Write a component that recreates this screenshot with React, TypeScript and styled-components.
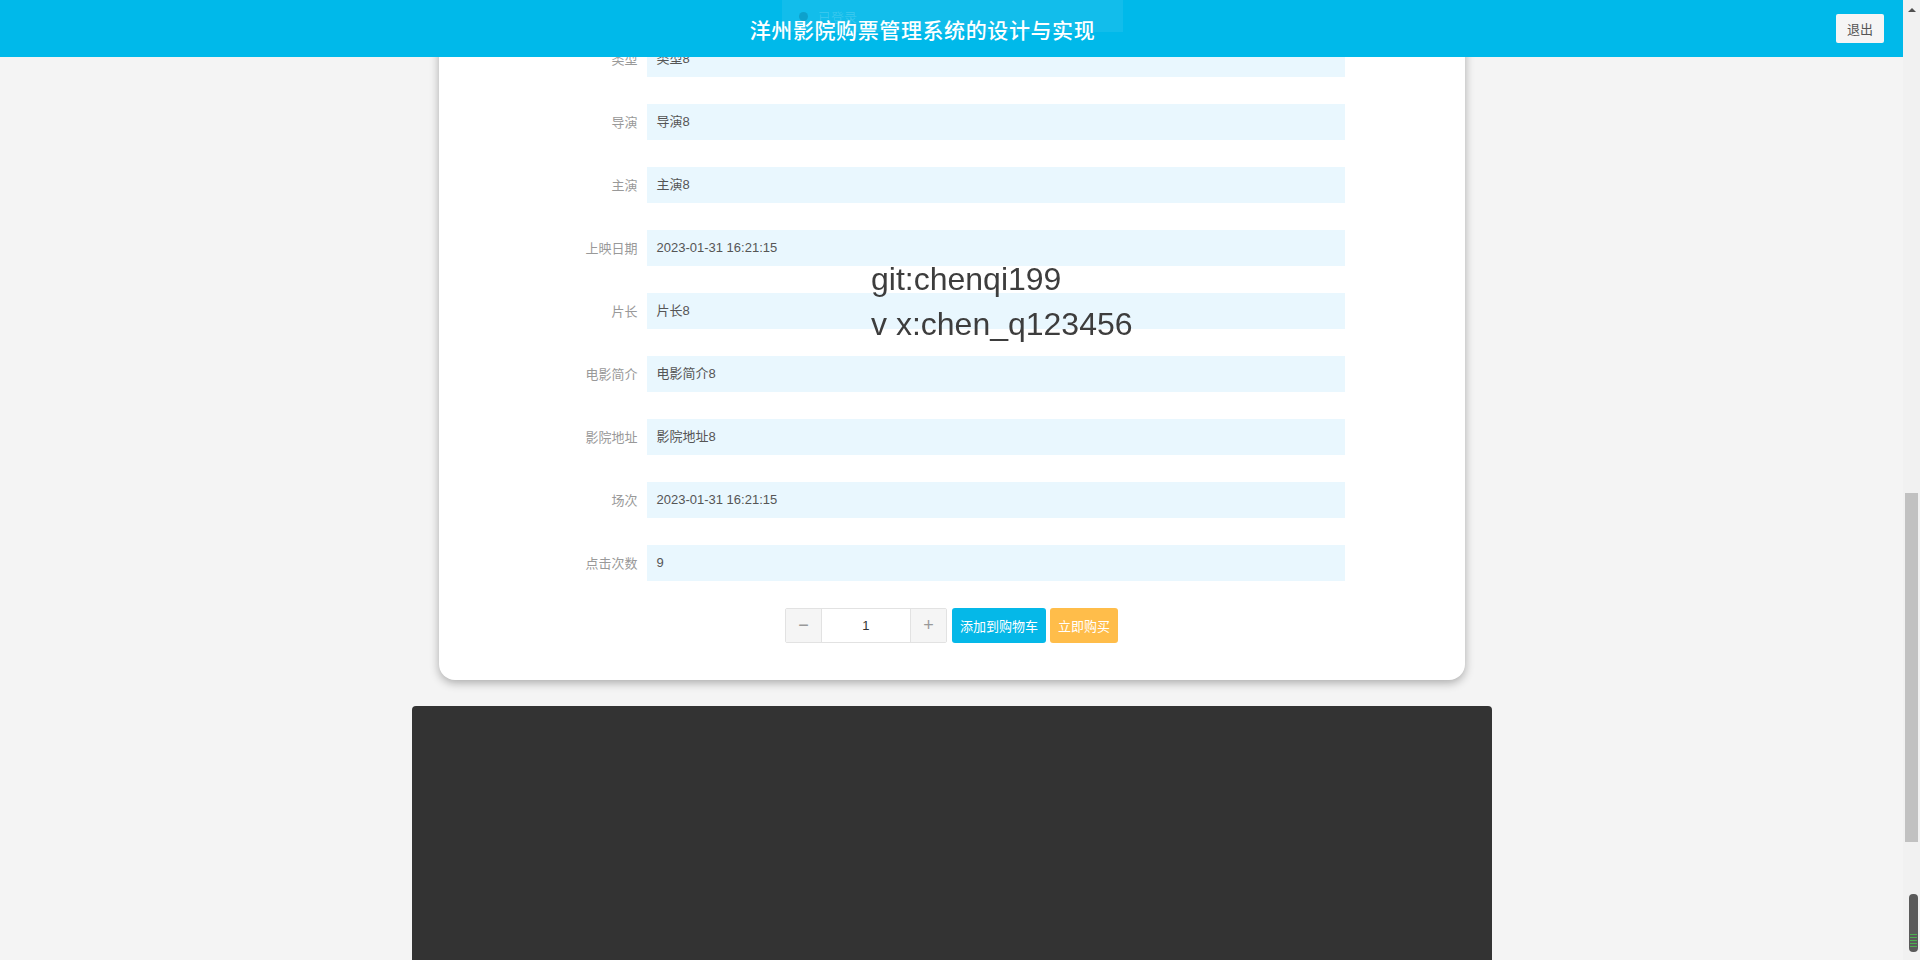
import React, { useLayoutEffect, useRef } from 'react'
import styled, { createGlobalStyle } from 'styled-components'

const GlobalStyle = createGlobalStyle`
  html, body {
    margin: 0;
    padding: 0;
    background: #f4f4f4;
    font-family: "Liberation Sans", "Noto Sans CJK SC", sans-serif;
  }

  ::-webkit-scrollbar {
    width: 0;
  }
`

const HeaderBar = styled.header`
  position: fixed;
  top: 0;
  left: 0;
  right: 17px;
  z-index: 10;
  height: 57px;
  display: flex;
  align-items: center;
  padding: 0 19px 0 9px;
  background: #00b9ea;
`

const Title = styled.h1`
  flex: 1;
  margin: 0;
  text-align: center;
  color: #fff;
  font-size: 21px;
  font-weight: 500;
  font-family: "Noto Sans CJK SC", sans-serif;
  letter-spacing: 0.6px;
`

const Ghost = styled.div`
  position: absolute;
  top: 0;
  left: 782px;
  width: 341px;
  height: 32px;
  display: flex;
  align-items: center;
  gap: 10px;
  padding-left: 17px;
  box-sizing: border-box;
  background: rgba(255, 255, 255, 0.07);
  color: rgba(255, 255, 255, 0.16);
  font-size: 13px;
  font-family: "Noto Sans CJK SC", sans-serif;
`

const GhostDot = styled.span`
  width: 9px;
  height: 9px;
  border-radius: 50%;
  background: rgba(0, 80, 110, 0.25);
`

const LogoutButton = styled.button`
  width: 48px;
  height: 29px;
  padding: 0;
  border: none;
  border-radius: 2px;
  background: #f5f5f5;
  color: #555;
  font-size: 13px;
  font-family: "Noto Sans CJK SC", sans-serif;
`

const Page = styled.main`
  padding: 77px 17px 0 0;
`

const Banner = styled.div`
  width: 1080px;
  height: 480px;
  margin: 0 auto 20px;
  border-radius: 4px;
  background: linear-gradient(135deg, #5a6b7c, #2f3a46);
`

const Card = styled.section`
  width: 1026px;
  margin: 0 auto 26px;
  padding: 40px 120px 37px 0;
  box-sizing: border-box;
  background: #fff;
  border-radius: 16px;
  box-shadow: 0 3px 10px rgba(0, 0, 0, 0.3);
`

const Row = styled.div`
  display: flex;
  align-items: flex-start;
  margin-bottom: 27px;
`

const Label = styled.div`
  flex: 0 0 208px;
  padding-right: 9px;
  box-sizing: border-box;
  text-align: right;
  line-height: 36px;
  color: #999;
  font-size: 13px;
  font-family: "Noto Sans CJK SC", sans-serif;
`

const Value = styled.div`
  flex: 1;
  height: 36px;
  line-height: 36px;
  padding: 0 10px;
  background: #e9f7fe;
  color: #555;
  font-size: 13px;
  font-family: "Liberation Sans", "Noto Sans CJK SC", sans-serif;
`

const Poster = styled.div`
  flex: 0 0 360px;
  height: 500px;
  border-radius: 4px;
  background: linear-gradient(160deg, #d7dde3, #9aa6b2);
`

const Actions = styled.div`
  display: flex;
  justify-content: center;
  align-items: center;
  gap: 4px;
  padding-left: 120px;
`

const Stepper = styled.div`
  display: flex;
  height: 35px;
  margin-right: 1px;
  border: 1px solid #e2e2e2;
  box-sizing: border-box;
  border-radius: 2px;
`

const StepButton = styled.button`
  width: 35px;
  padding: 0;
  border: none;
  background: #f5f5f5;
  color: #999;
  font-size: 18px;
  font-family: "Liberation Sans", sans-serif;
  font-weight: 300;
`

const StepInput = styled.div`
  width: 88px;
  display: flex;
  align-items: center;
  justify-content: center;
  border-left: 1px solid #e2e2e2;
  border-right: 1px solid #e2e2e2;
  background: #fff;
  color: #333;
  font-size: 13px;
`

const ActionButton = styled.button<{ tone: 'blue' | 'orange' }>`
  height: 35px;
  padding: 0 8px;
  border: none;
  border-radius: 3px;
  background: ${({ tone }) => (tone === 'blue' ? '#05b8e8' : '#ffbd4a')};
  color: #fff;
  font-size: 13px;
  font-family: "Noto Sans CJK SC", sans-serif;
`

const Footer = styled.footer`
  width: 1080px;
  height: 534px;
  margin: 0 auto;
  border-radius: 4px 4px 0 0;
  background: #333;
`

const Watermark = styled.div`
  position: fixed;
  top: 257px;
  left: 871px;
  z-index: 20;
  color: #3d3d3d;
  font-size: 32px;
  line-height: 45px;
  font-family: "Liberation Sans", sans-serif;
  pointer-events: none;
`

/* window scrollbar, drawn over the right edge */
const ScrollTrack = styled.aside`
  position: fixed;
  top: 0;
  right: 0;
  bottom: 0;
  z-index: 25;
  width: 17px;
  background: #f1f1f1;
`

const ScrollArrow = styled.span`
  position: absolute;
  top: 8px;
  left: 5px;
  width: 0;
  height: 0;
  border-left: 4px solid transparent;
  border-right: 4px solid transparent;
  border-bottom: 4px solid #505050;
`

const ScrollThumb = styled.span`
  position: absolute;
  top: 493px;
  left: 2px;
  width: 13px;
  height: 349px;
  background: #c1c1c1;
`

const Widget = styled.div`
  position: fixed;
  top: 894px;
  right: 2px;
  z-index: 30;
  width: 9px;
  height: 58px;
  border-radius: 4px;
  background: #5a5a5a;
  display: flex;
  flex-direction: column;
  justify-content: flex-end;
  gap: 2px;
  padding: 0 1px 5px;
  box-sizing: border-box;
`

const WidgetLine = styled.span`
  height: 1px;
  background: #4caf50;
`

const fields = [
  { label: '类型', value: '类型8' },
  { label: '导演', value: '导演8' },
  { label: '主演', value: '主演8' },
  { label: '上映日期', value: '2023-01-31 16:21:15' },
  { label: '片长', value: '片长8' },
  { label: '电影简介', value: '电影简介8' },
  { label: '影院地址', value: '影院地址8' },
  { label: '场次', value: '2023-01-31 16:21:15' },
  { label: '点击次数', value: '9' }
]

export default function App() {
  const anchorRef = useRef<HTMLDivElement>(null)

  useLayoutEffect(() => {
    const el = anchorRef.current
    if (!el) return
    const top = el.getBoundingClientRect().top + window.scrollY
    window.scrollTo(0, top - 41)
  }, [])

  return (
    <>
      <GlobalStyle />
      <HeaderBar>
        <Ghost>
          <GhostDot />
          已登录
        </Ghost>
        <Title>洋州影院购票管理系统的设计与实现</Title>
        <LogoutButton>退出</LogoutButton>
      </HeaderBar>
      <Page>
        <Banner />
        <Card>
          <Row>
            <Label>电影名称</Label>
            <Value>电影名称8</Value>
          </Row>
          <Row>
            <Label>图片</Label>
            <Poster />
          </Row>
          <Row>
            <Label>票价</Label>
            <Value>8</Value>
          </Row>
          <Row>
            <Label>座位数</Label>
            <Value>80</Value>
          </Row>
          {fields.map((f) => (
            <Row key={f.label} ref={f.label === '类型' ? anchorRef : undefined}>
              <Label>{f.label}</Label>
              <Value>{f.value}</Value>
            </Row>
          ))}
          <Actions>
            <Stepper>
              <StepButton>−</StepButton>
              <StepInput>1</StepInput>
              <StepButton>+</StepButton>
            </Stepper>
            <ActionButton tone="blue">添加到购物车</ActionButton>
            <ActionButton tone="orange">立即购买</ActionButton>
          </Actions>
        </Card>
        <Footer />
      </Page>
      <Watermark>
        git:chenqi199
        <br />v x:chen_q123456
      </Watermark>
      <ScrollTrack>
        <ScrollArrow />
        <ScrollThumb />
      </ScrollTrack>
      <Widget>
        <WidgetLine />
        <WidgetLine />
        <WidgetLine />
        <WidgetLine />
        <WidgetLine />
      </Widget>
    </>
  )
}
